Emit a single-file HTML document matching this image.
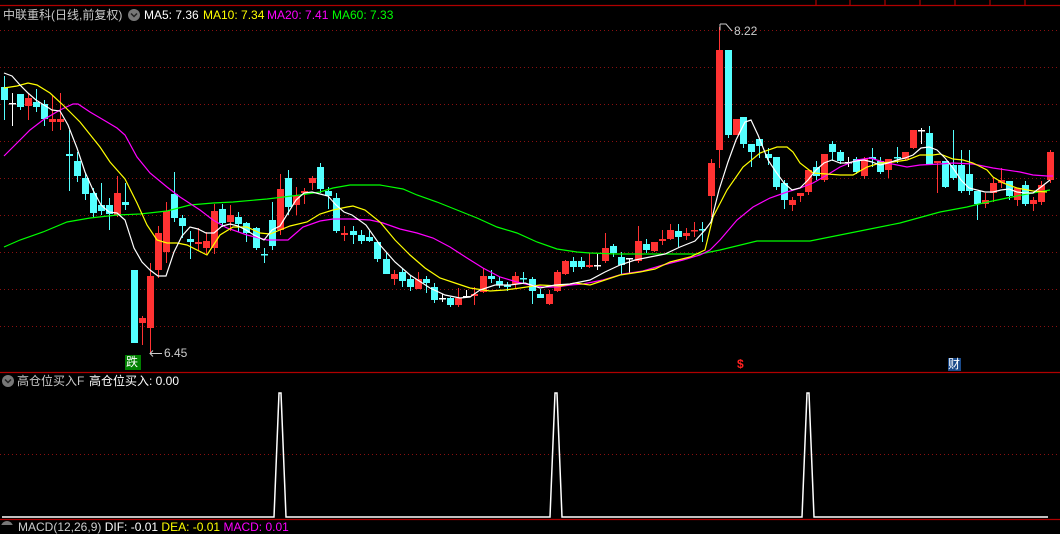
<!DOCTYPE html>
<html><head><meta charset="utf-8"><style>
html,body{margin:0;padding:0;background:#000;width:1060px;height:525px;overflow:hidden}
svg{position:absolute;left:0;top:0}
.t{position:absolute;font:12px "Liberation Sans","Noto Sans CJK SC",sans-serif;white-space:nowrap;line-height:14px}
</style></head><body>
<svg id="s" width="1060" height="525" xmlns="http://www.w3.org/2000/svg">
<g stroke="#8a1010" stroke-dasharray="1,3" stroke-width="1">
<line x1="0" y1="30.5" x2="1060" y2="30.5"/><line x1="0" y1="67.5" x2="1060" y2="67.5"/><line x1="0" y1="104.5" x2="1060" y2="104.5"/><line x1="0" y1="141.5" x2="1060" y2="141.5"/><line x1="0" y1="178.5" x2="1060" y2="178.5"/><line x1="0" y1="215.5" x2="1060" y2="215.5"/><line x1="0" y1="252.5" x2="1060" y2="252.5"/><line x1="0" y1="289.5" x2="1060" y2="289.5"/><line x1="0" y1="326.5" x2="1060" y2="326.5"/><line x1="0" y1="454.5" x2="1060" y2="454.5"/>
</g>
<g stroke="#b00000" stroke-width="1.2">
<line x1="0" y1="5.5" x2="1060" y2="5.5"/><line x1="0" y1="372.5" x2="1060" y2="372.5"/><line x1="0" y1="519.5" x2="1060" y2="519.5"/>
<line x1="816" y1="0" x2="816" y2="5"/><line x1="850" y1="0" x2="850" y2="5"/><line x1="885" y1="0" x2="885" y2="5"/><line x1="920" y1="0" x2="920" y2="5"/><line x1="955" y1="0" x2="955" y2="5"/><line x1="990" y1="0" x2="990" y2="5"/><line x1="1025" y1="0" x2="1025" y2="5"/>
</g>
<g id="c"></g>
<g fill="none" stroke-width="1.2">
<polyline stroke="#00ff00" points="4,247 20,240 43,232 67,222 90,218 117,215 140,214 167,211 190,205 213,203 233,202 267,199 300,195 320,192 333,188 350,185 380,185 403,189 417,195 437,202 457,210 477,218 497,227 517,233 537,242 557,249 577,252 590,253 617,254 650,254 683,254 700,254 720,250 757,241 810,241 850,233 900,223 940,212 967,207 983,203 1007,198 1027,194 1050,190"/>
<polyline stroke="#ff00ff" points="4,156 20,140 30,130 43,120 60,110 73,104 78,104 90,112 107,122 117,128 125,135 137,157 150,173 167,187 180,197 200,210 213,220 227,228 247,235 267,240 288,240 303,227 320,221 333,219 350,219 370,220 383,223 400,229 417,233 433,238 450,247 467,258 483,268 500,277 517,282 530,285 543,287 557,287 570,285 583,284 603,280 623,274 643,271 663,265 683,260 700,255 710,250 720,240 737,220 753,207 770,198 787,192 800,188 813,183 827,175 840,167 857,160 870,158 887,163 907,167 920,165 940,164 953,163 973,164 993,168 1020,172 1033,175 1047,176 1053,176"/>
<polyline stroke="#ffff00" points="4,88 17,86 28,83 37,85 50,93 63,105 80,122 100,147 110,162 125,179 137,203 147,225 157,240 167,243 177,243 187,245 207,255 220,235 233,227 247,227 260,233 270,234 280,230 290,226 307,222 320,214 333,210 347,207 353,206 365,210 380,222 395,240 410,255 425,268 440,278 455,283 470,288 490,291 505,290 520,288 540,285 560,286 575,283 590,285 605,280 620,275 640,272 655,269 670,262 690,257 705,250 713,217 727,190 743,167 760,153 777,147 787,147 793,152 800,163 813,173 827,174 840,175 853,175 867,167 880,163 893,162 907,160 920,155 933,155 940,154 953,159 963,160 973,163 987,170 993,177 1003,183 1017,188 1033,191 1047,192"/>
<polyline stroke="#ffffff" points="4,73 12,76 20,85 28,93 36,100 44,105 52,110 60,111 68,125 77,148 85,172 93,190 101,205 109,212 117,213 125,220 134,248 142,262 150,270 158,276 166,276 174,252 182,236 190,227 198,229 206,233 214,233 222,226 230,224 238,226 246,230 254,235 264,240 272,230 280,226 288,213 296,200 304,193 312,192 320,194 328,196 336,205 344,212 352,215 366,225 380,245 395,262 410,275 430,288 445,295 460,298 470,297 480,290 495,285 510,285 525,283 540,288 555,285 570,284 590,280 605,272 620,265 635,260 650,257 665,254 680,247 695,241 705,230 711,222 719,190 728,162 736,140 745,122 751,120 758,135 768,160 776,172 784,183 792,190 800,188 808,180 816,170 824,163 832,160 840,163 848,163 856,161 864,160 872,162 880,165 888,163 897,160 905,158 913,155 921,148 929,147 937,150 945,158 953,168 961,180 969,188 977,190 985,192 993,192 1001,190 1009,189 1017,192 1025,193 1033,193 1041,187 1050,180"/>
</g>
<polyline fill="none" stroke="#fff" stroke-width="1.5" points="2,517 272,517 274,517 279,393 281,393 286,517 548,517 550,517 555,393 557,393 562,517 800,517 802,517 807,393 809,393 814,517 1048,517"/>
<g stroke="#ccc" fill="none" stroke-width="1">
<line x1="150" y1="353.5" x2="162" y2="353.5"/><polyline points="153,350.5 150,353.5 153,356.5"/>
<line x1="720" y1="24" x2="720" y2="30"/><polyline points="720,24 726,24 732,31"/>
</g>
<rect x="125" y="355" width="16" height="15" fill="#008000"/>
<rect x="948" y="358" width="13" height="13" fill="#1a4a8a"/>
<circle cx="134" cy="15" r="6" fill="#777"/><polyline points="131,13.5 134,16.5 137,13.5" fill="none" stroke="#222" stroke-width="1.5"/>
<circle cx="8" cy="381" r="6" fill="#777"/><polyline points="5,379.5 8,382.5 11,379.5" fill="none" stroke="#222" stroke-width="1.5"/>
<circle cx="7" cy="527" r="6" fill="#777"/>
</svg>
<div class="t" style="left:3px;top:8px;color:#c8c8c8">中联重科(日线,前复权)</div>
<div class="t" style="left:144px;top:8px;color:#fff">MA5: 7.36</div>
<div class="t" style="left:203px;top:8px;color:#ffff00">MA10: 7.34</div>
<div class="t" style="left:267px;top:8px;color:#ff00ff">MA20: 7.41</div>
<div class="t" style="left:332px;top:8px;color:#00ff00">MA60: 7.33</div>
<div class="t" style="left:164px;top:346px;color:#ccc">6.45</div>
<div class="t" style="left:734px;top:24px;color:#ccc">8.22</div>
<div class="t" style="left:126px;top:355px;color:#fff">跌</div>
<div class="t" style="left:737px;top:357px;color:#ff2020;font-weight:bold">$</div>
<div class="t" style="left:948px;top:357px;color:#fff">财</div>
<div class="t" style="left:17px;top:374px;color:#c8c8c8">高仓位买入F</div>
<div class="t" style="left:89px;top:374px;color:#fff">高仓位买入: 0.00</div>
<div class="t" style="left:18px;top:520px;color:#ccc">MACD(12,26,9) <span style="color:#fff">DIF: -0.01</span> <span style="color:#ff0">DEA: -0.01</span> <span style="color:#f0f">MACD: 0.01</span></div>
<script>
var D=[[4,76,120,87,100,'c'],[12,93,126,103,103,'w'],[20,94,110,94,107,'c'],[28,93,120,98,106,'r'],[36,89,112,102,107,'c'],[44,100,126,104,119,'c'],[52,95,131,119,122,'r'],[60,93,130,119,122,'r'],[69,130,191,154,156,'c'],[77,152,182,161,176,'c'],[85,173,200,178,194,'c'],[93,188,218,193,213,'c'],[101,183,215,205,211,'c'],[109,198,230,205,214,'c'],[117,176,217,193,215,'r'],[125,183,210,202,205,'c'],[134,270,343,270,343,'c'],[142,316,345,318,323,'r'],[150,263,354,276,328,'r'],[158,226,278,233,270,'r'],[166,202,263,211,252,'r'],[174,172,222,194,218,'c'],[182,215,238,218,226,'c'],[190,231,259,239,242,'c'],[198,228,250,242,244,'r'],[206,232,254,241,248,'r'],[214,204,254,211,248,'r'],[222,204,227,209,223,'c'],[230,205,231,215,222,'r'],[238,212,232,217,224,'c'],[246,222,242,223,233,'c'],[256,227,250,228,248,'c'],[264,248,263,254,254,'c'],[272,202,250,220,246,'c'],[280,174,235,189,230,'r'],[288,170,215,178,207,'c'],[296,187,215,196,205,'r'],[304,188,204,191,193,'r'],[312,176,190,178,183,'r'],[320,163,193,167,189,'c'],[328,187,209,191,196,'c'],[336,193,233,198,231,'c'],[344,226,241,233,235,'r'],[353,226,244,231,235,'c'],[361,230,244,235,241,'c'],[369,231,242,237,241,'c'],[377,242,262,242,259,'c'],[386,252,274,259,274,'c'],[394,270,285,274,279,'r'],[402,268,287,272,281,'c'],[410,275,291,279,287,'c'],[418,272,289,279,289,'r'],[426,276,293,279,283,'c'],[434,283,303,287,300,'c'],[442,294,302,298,298,'w'],[450,297,307,298,305,'c'],[458,288,307,298,305,'r'],[466,290,298,296,296,'w'],[474,287,305,294,296,'r'],[483,268,293,276,292,'r'],[491,270,283,276,279,'c'],[499,277,288,281,285,'c'],[507,282,291,285,287,'c'],[515,272,288,276,284,'r'],[523,272,283,278,278,'c'],[532,277,304,279,291,'c'],[540,289,298,294,298,'c'],[549,290,305,294,304,'r'],[557,270,292,272,291,'r'],[565,260,275,261,274,'r'],[573,257,272,261,267,'c'],[581,257,269,261,267,'c'],[589,253,268,265,267,'r'],[597,254,270,265,265,'w'],[605,233,263,248,261,'r'],[613,244,257,246,253,'c'],[621,252,274,257,265,'c'],[629,258,274,258,258,'w'],[638,226,263,241,261,'r'],[646,239,253,244,250,'c'],[654,242,252,242,251,'r'],[662,230,245,239,241,'r'],[670,224,240,230,239,'r'],[678,224,247,231,237,'c'],[686,228,240,233,236,'r'],[694,222,237,230,231,'r'],[702,222,242,229,229,'c'],[711,159,217,163,196,'r'],[719,27,168,50,150,'r'],[728,50,138,50,135,'c'],[736,119,135,119,135,'r'],[743,117,148,117,144,'c'],[751,144,167,144,152,'c'],[759,139,158,139,146,'c'],[768,148,165,154,158,'c'],[776,157,190,157,187,'c'],[784,180,209,183,200,'c'],[792,197,211,200,205,'r'],[800,193,202,193,196,'r'],[808,170,195,170,192,'r'],[816,161,180,167,176,'c'],[824,154,182,154,180,'r'],[832,141,161,144,152,'c'],[840,150,164,152,161,'c'],[848,157,167,162,162,'w'],[856,157,174,159,172,'c'],[864,157,179,159,176,'r'],[872,148,167,157,159,'c'],[880,157,174,161,172,'c'],[888,159,178,159,170,'r'],[897,147,163,157,157,'c'],[905,152,160,152,159,'r'],[913,130,149,130,148,'r'],[921,128,144,130,130,'w'],[929,126,165,133,165,'c'],[937,161,193,161,163,'r'],[945,161,188,161,187,'c'],[953,130,180,165,178,'c'],[961,150,193,165,191,'c'],[969,150,195,174,191,'c'],[977,191,220,191,204,'c'],[985,193,208,200,204,'r'],[993,177,202,183,193,'r'],[1001,168,188,180,183,'r'],[1009,181,200,181,196,'c'],[1017,188,206,188,200,'r'],[1025,181,206,185,204,'c'],[1033,197,211,200,204,'r'],[1041,181,205,185,202,'r'],[1050,150,183,152,180,'r']];
var col={c:'#54ffff',r:'#ff3232',w:'#ffffff'},h='';
D.forEach(function(d){var x=d[0],f=col[d[5]],bh=Math.max(d[4]-d[3],1);
h+='<rect x="'+(x)+'" y="'+d[1]+'" width="1" height="'+(d[2]-d[1])+'" fill="'+f+'"/>';
if(d[5]=='w'||bh<=1)h+='<rect x="'+(x-3)+'" y="'+d[3]+'" width="7" height="1.5" fill="'+f+'"/>';
else h+='<rect x="'+(x-3)+'" y="'+d[3]+'" width="7" height="'+bh+'" fill="'+f+'"/>';});
document.getElementById('c').innerHTML=h;
</script>
</body></html>
